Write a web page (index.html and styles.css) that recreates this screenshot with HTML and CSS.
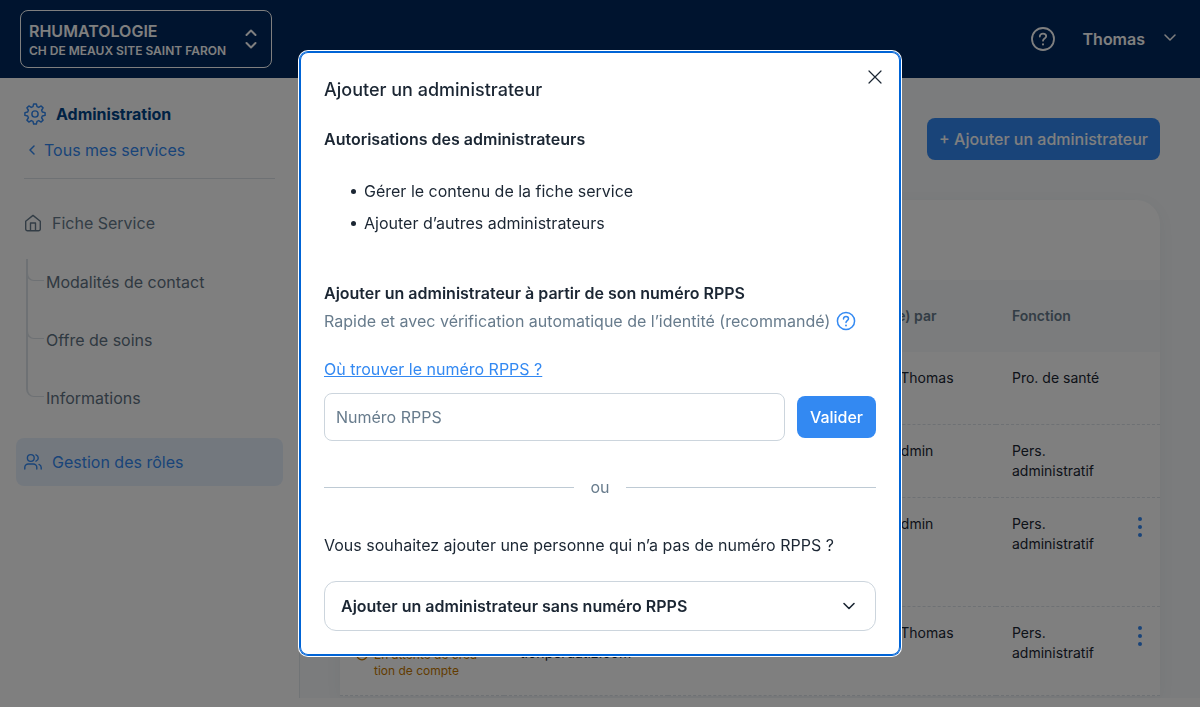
FILE: index.html
```
<!DOCTYPE html>
<html lang="fr">
<head>
  <meta charset="UTF-8">
  <meta name="viewport" content="width=device-width, initial-scale=1">
  <title>Gestion des rôles</title>
  <link rel="stylesheet" href="styles.css">
</head>
<body>
  <header class="topbar">
    <button class="service-select" type="button">
      <span class="service-text">
        <span class="service-name">RHUMATOLOGIE</span>
        <span class="service-site">CH DE MEAUX SITE SAINT FARON</span>
      </span>
      <svg width="14" height="20" viewBox="0 0 14 20" fill="none" stroke="currentColor" stroke-width="2" stroke-linecap="round" stroke-linejoin="round"><path d="M2.500 6L7 1.500 11.500 6M2.500 14L7 18.500l4.500-4.500"/></svg>
    </button>
    <div class="topbar-right">
      <button class="icon-button" type="button" aria-label="Aide">
        <svg width="24" height="24" viewBox="0 0 24 24" fill="none" stroke="currentColor" stroke-width="1.8" stroke-linecap="round"><circle cx="12" cy="12" r="11"/><path d="M8.800 9.500C8.800 7.700 10.200 6.600 12 6.600s3.200 1.100 3.200 2.700c0 2.200-3.200 2.300-3.200 4.400"/><path d="M12 17.200v.2" stroke-width="2"/></svg>
      </button>
      <button class="user-button" type="button">
        Thomas
        <svg width="12" height="12" viewBox="0 0 12 12" fill="none" stroke="currentColor" stroke-width="1.5" stroke-linecap="round" stroke-linejoin="round"><path d="M1 2l5 5 5-5"/></svg>
      </button>
    </div>
  </header>

  <div class="layout">
    <aside class="sidebar">
      <div class="side-title">
        <svg width="22" height="22" viewBox="0 0 24 24" fill="none" stroke="currentColor" stroke-width="1.6" stroke-linejoin="round"><circle cx="12" cy="12" r="3.400"/><path d="M10.500 1h3l.7 3 1.900.8 2.600-1.600 2.100 2.100-1.600 2.600.8 1.900 3 .7v3l-3 .7-.8 1.900 1.600 2.600-2.100 2.100-2.600-1.600-1.900.8-.7 3h-3l-.7-3-1.900-.8-2.600 1.600-2.100-2.100 1.600-2.600-.8-1.900-3-.7v-3l3-.7.8-1.900-1.600-2.600 2.100-2.100 2.600 1.600 1.900-.8z"/></svg>
        Administration
      </div>
      <a class="back-link" href="#">
        <svg width="8" height="10" viewBox="0 0 8 10" fill="none" stroke="currentColor" stroke-width="1.5" stroke-linecap="round" stroke-linejoin="round"><path d="M6 1L2 5l4 4"/></svg>
        Tous mes services
      </a>
      <nav>
        <a class="nav-item" href="#">
          <svg width="18" height="18" viewBox="0 0 18 18" fill="none" stroke="currentColor" stroke-width="1.4" stroke-linejoin="round"><path d="M1.700 7.200L9 1.400l7.300 5.800v7.800a1.800 1.800 0 0 1-1.800 1.800h-11A1.800 1.800 0 0 1 1.700 15zM6.500 16.500V9h5v7.500"/></svg>
          Fiche Service
        </a>
        <ul class="sub-nav">
          <li><a href="#">Modalités de contact</a></li>
          <li><a href="#">Offre de soins</a></li>
          <li><a href="#">Informations</a></li>
        </ul>
        <a class="nav-item active" href="#">
          <svg width="18" height="18" viewBox="0 0 18 18" fill="none" stroke="currentColor" stroke-width="1.4" stroke-linecap="round" stroke-linejoin="round"><circle cx="6.800" cy="5" r="3.400"/><path d="M.8 16v-1.500a3.500 3.500 0 0 1 3.500-3.500h5a3.500 3.500 0 0 1 3.500 3.500V16M12 1.800a3.400 3.400 0 0 1 0 6.400M15 11.400a3.500 3.500 0 0 1 2.200 3.200V16"/></svg>
          Gestion des rôles
        </a>
      </nav>
    </aside>

    <main class="content">
      <div class="actions">
        <button class="btn" type="button">+ Ajouter un administrateur</button>
      </div>
      <div class="card">
        <div class="card-head"></div>
        <table>
          <thead>
            <tr>
              <th></th>
              <th></th>
              <th></th>
              <th>Ajouté(e) par</th>
              <th>Fonction</th>
            </tr>
          </thead>
          <tbody>
            <tr>
              <td></td>
              <td></td>
              <td></td>
              <td>Durand Thomas</td>
              <td>Pro. de santé</td>
            </tr>
            <tr>
              <td></td>
              <td></td>
              <td></td>
              <td>Super Admin</td>
              <td>Pers.<br>administratif</td>
            </tr>
            <tr class="row-tall">
              <td></td>
              <td></td>
              <td></td>
              <td>Super Admin</td>
              <td>
                <div class="cell-menu">
                  <span>Pers.<br>administratif</span>
                  <button class="row-menu" type="button" aria-label="Options"><i></i><i></i><i></i></button>
                </div>
              </td>
            </tr>
            <tr class="row-pending">
              <td>
                <span class="pending">
                  <svg width="12" height="16" viewBox="0 0 12 16" fill="none" stroke="currentColor" stroke-width="1.2"><circle cx="6" cy="7.500" r="5.300"/><path d="M6 4.500v3l2 1"/></svg>
                  <span>En attente de créa-<br>tion de compte</span>
                </span>
              </td>
              <td><br>tionperdatiz.com</td>
              <td></td>
              <td>Durand Thomas</td>
              <td>
                <div class="cell-menu">
                  <span>Pers.<br>administratif</span>
                  <button class="row-menu" type="button" aria-label="Options"><i></i><i></i><i></i></button>
                </div>
              </td>
            </tr>
          </tbody>
        </table>
      </div>
    </main>
  </div>

  <div class="overlay">
    <div class="modal" role="dialog" aria-modal="true" aria-labelledby="modal-title">
      <button class="close" type="button" aria-label="Fermer">
        <svg width="14" height="14" viewBox="0 0 14 14" fill="none" stroke="currentColor" stroke-width="1.2" stroke-linecap="round"><path d="M1 1l12 12M13 1L1 13"/></svg>
      </button>
      <h2 id="modal-title">Ajouter un administrateur</h2>
      <h3>Autorisations des administrateurs</h3>
      <ul class="rights">
        <li>Gérer le contenu de la fiche service</li>
        <li>Ajouter d’autres administrateurs</li>
      </ul>
      <h3>Ajouter un administrateur à partir de son numéro RPPS</h3>
      <p class="hint">
        Rapide et avec vérification automatique de l’identité (recommandé)
        <svg width="20" height="20" viewBox="0 0 24 24" fill="none" stroke="currentColor" stroke-width="1.8" stroke-linecap="round"><circle cx="12" cy="12" r="10.300"/><path d="M9 9.500C9 7.700 10.300 6.600 12 6.600s3 1.100 3 2.700c0 2.200-3 2.300-3 4.400"/><path d="M12 17.200v.2" stroke-width="2.200"/></svg>
      </p>
      <a class="help-link" href="#">Où trouver le numéro RPPS ?</a>
      <form class="rpps-form">
        <input type="text" id="rpps" aria-label="Numéro RPPS" placeholder="Numéro RPPS">
        <button class="btn" type="button">Valider</button>
      </form>
      <div class="separator">ou</div>
      <p class="question">Vous souhaitez ajouter une personne qui n’a pas de numéro RPPS ?</p>
      <button class="accordion" type="button">
        Ajouter un administrateur sans numéro RPPS
        <svg width="14" height="14" viewBox="0 0 14 14" fill="none" stroke="currentColor" stroke-width="1.6" stroke-linecap="round" stroke-linejoin="round"><path d="M2 4.500l5 5 5-5"/></svg>
      </button>
    </div>
  </div>
</body>
</html>
```
FILE: styles.css
```
* {
  box-sizing: border-box;
}
body {
  margin: 0;
  font-family: Inter, "Liberation Sans", sans-serif;
  font-size: 16px;
  line-height: 24px;
  color: #1b2633;
  background: #fff;
}
button, input {
  font: inherit;
  color: inherit;
}
button {
  padding: 0;
  border: none;
  background: none;
  cursor: pointer;
}
a {
  color: inherit;
  text-decoration: none;
}
h2, h3, p, ul {
  margin: 0;
  padding: 0;
}
svg {
  display: block;
  flex: none;
}

/* Header */
.topbar {
  display: flex;
  align-items: center;
  justify-content: space-between;
  height: 78px;
  padding: 0 24px 0 20px;
  background: #00285e;
  color: #fff;
}
.service-select {
  display: flex;
  align-items: center;
  justify-content: space-between;
  width: 252px;
  height: 58px;
  padding: 0 13px 0 8px;
  border: 1px solid #fff;
  border-radius: 8px;
  text-align: left;
}
.service-text {
  display: flex;
  flex-direction: column;
  padding-top: 4px;
}
.service-name {
  font-weight: 600;
  line-height: 20px;
}
.service-site {
  font-size: 12px;
  font-weight: 600;
  line-height: 20px;
}
.topbar-right {
  display: flex;
  align-items: center;
  gap: 28px;
}
.user-button {
  display: flex;
  align-items: center;
  gap: 19px;
  font-weight: 600;
}

/* Sidebar */
.layout {
  display: flex;
}
.sidebar {
  width: 299px;
  padding: 24px 16px;
}
.side-title {
  display: flex;
  align-items: center;
  gap: 10px;
  padding-left: 8px;
  color: #004488;
  font-weight: 700;
}
.side-title svg {
  color: #3389f2;
}
.back-link {
  display: flex;
  align-items: center;
  gap: 8px;
  margin: 0 8px 20px;
  padding: 12px 0 16px 4px;
  border-bottom: 1px solid #dce2e8;
  color: #3389f2;
}
.nav-item {
  display: flex;
  align-items: center;
  gap: 10px;
  height: 48px;
  padding: 0 8px;
  border-radius: 8px;
  color: #677b8c;
}
.nav-item.active {
  background: #e7f1fd;
  color: #3389f2;
}
.sub-nav {
  margin: 12px 0 5px 10px;
  list-style: none;
  color: #5f7283;
}
.sub-nav li {
  display: flex;
  height: 58px;
  padding-top: 11px;
  background: linear-gradient(#dde3e9, #dde3e9) 0 0 / 2px 100% no-repeat;
}
.sub-nav li::before {
  content: "";
  width: 16px;
  height: 10px;
  margin-right: 2px;
  border: solid #dde3e9;
  border-width: 0 0 1px 2px;
  border-radius: 0 0 0 8px;
}
.sub-nav li:last-child {
  background-size: 2px 12px;
}

/* Table */
.content {
  flex: 1;
  min-width: 0;
  padding: 40px 40px 2px;
  border-left: 1px solid #e3e8ed;
  background: #f6f8fa;
}
.actions {
  display: flex;
  justify-content: flex-end;
}
.btn {
  height: 42px;
  padding: 0 13px;
  border-radius: 8px;
  background: #3389f2;
  color: #fff;
  font-weight: 500;
}
.actions .btn {
  padding: 0 12px;
}
.card {
  margin-top: 40px;
  border-radius: 24px 24px 0 0;
  background: #fff;
  box-shadow: 0 4px 16px rgba(60, 80, 110, 0.06);
}
.card-head {
  height: 80px;
}
table {
  width: 100%;
  border-collapse: separate;
  border-spacing: 0;
  table-layout: fixed;
  font-size: 14px;
  line-height: 20px;
  text-align: left;
}
th {
  height: 72px;
  padding: 0 16px;
  background: #f6f8fa;
  color: #677b8c;
  font-weight: 600;
}
td {
  height: 73px;
  padding: 16px;
  border-bottom: 1px dashed #dce2e8;
  vertical-align: top;
}
.row-tall td {
  height: 109px;
}
.row-pending td {
  height: 89px;
}
.row-pending td:first-child {
  vertical-align: bottom;
}
.pending {
  display: flex;
  gap: 6px;
  color: #c57800;
  font-size: 12px;
  line-height: 16px;
  white-space: nowrap;
}
.cell-menu {
  display: flex;
  justify-content: space-between;
  padding-right: 2px;
}
.row-menu {
  display: flex;
  flex-direction: column;
  align-self: flex-start;
  gap: 4px;
  margin-top: 3px;
}
.row-menu i {
  width: 4px;
  height: 4px;
  border-radius: 50%;
  background: #3389f2;
}

/* Modal */
.overlay {
  position: fixed;
  inset: 0;
  display: flex;
  align-items: center;
  justify-content: center;
  background: rgba(0, 0, 0, 0.5);
}
.modal {
  position: relative;
  width: 100%;
  max-width: 600px;
  padding: 24px;
  border-radius: 8px;
  background: #fff;
  box-shadow: inset 0 0 0 1px #0064d6, 0 0 0 1px #0064d6, 0 0 0 2px #fff;
}
.close {
  position: absolute;
  top: 18px;
  right: 18px;
}
.modal h2 {
  margin-bottom: 23px;
  font-size: 18px;
  font-weight: 500;
  line-height: 28px;
}
.modal h3 {
  font-size: 16px;
  font-weight: 600;
}
.rights {
  margin: 24px 0 42px;
  padding-left: 27px;
  list-style: none;
}
.rights li {
  display: flex;
  align-items: center;
  gap: 8px;
  padding: 4px 0;
}
.rights li::before {
  content: "";
  width: 5px;
  height: 5px;
  border-radius: 50%;
  background: #1b2633;
}
.hint {
  display: flex;
  align-items: center;
  gap: 6px;
  margin: 4px 0 24px;
  color: #677b8c;
}
.hint svg {
  color: #3389f2;
}
.help-link {
  color: #3389f2;
  text-decoration: underline;
}
.rpps-form {
  display: flex;
  align-items: center;
  gap: 12px;
  margin-top: 12px;
}
.rpps-form input {
  flex: 1;
  min-width: 0;
  height: 48px;
  padding: 0 11px;
  border: 1px solid #ccd5dd;
  border-radius: 8px;
}
.rpps-form input::placeholder {
  color: #677b8c;
}
.separator {
  display: flex;
  align-items: center;
  gap: 16px;
  margin: 34px 0;
  color: #677b8c;
}
.separator::before,
.separator::after {
  content: "";
  flex: 1;
  height: 1px;
  background: #becad4;
}
.accordion {
  display: flex;
  align-items: center;
  justify-content: space-between;
  width: 100%;
  height: 50px;
  margin-top: 24px;
  padding: 0 19px 0 16px;
  border: 1px solid #ccd5dd;
  border-radius: 12px;
  font-weight: 600;
}
```
